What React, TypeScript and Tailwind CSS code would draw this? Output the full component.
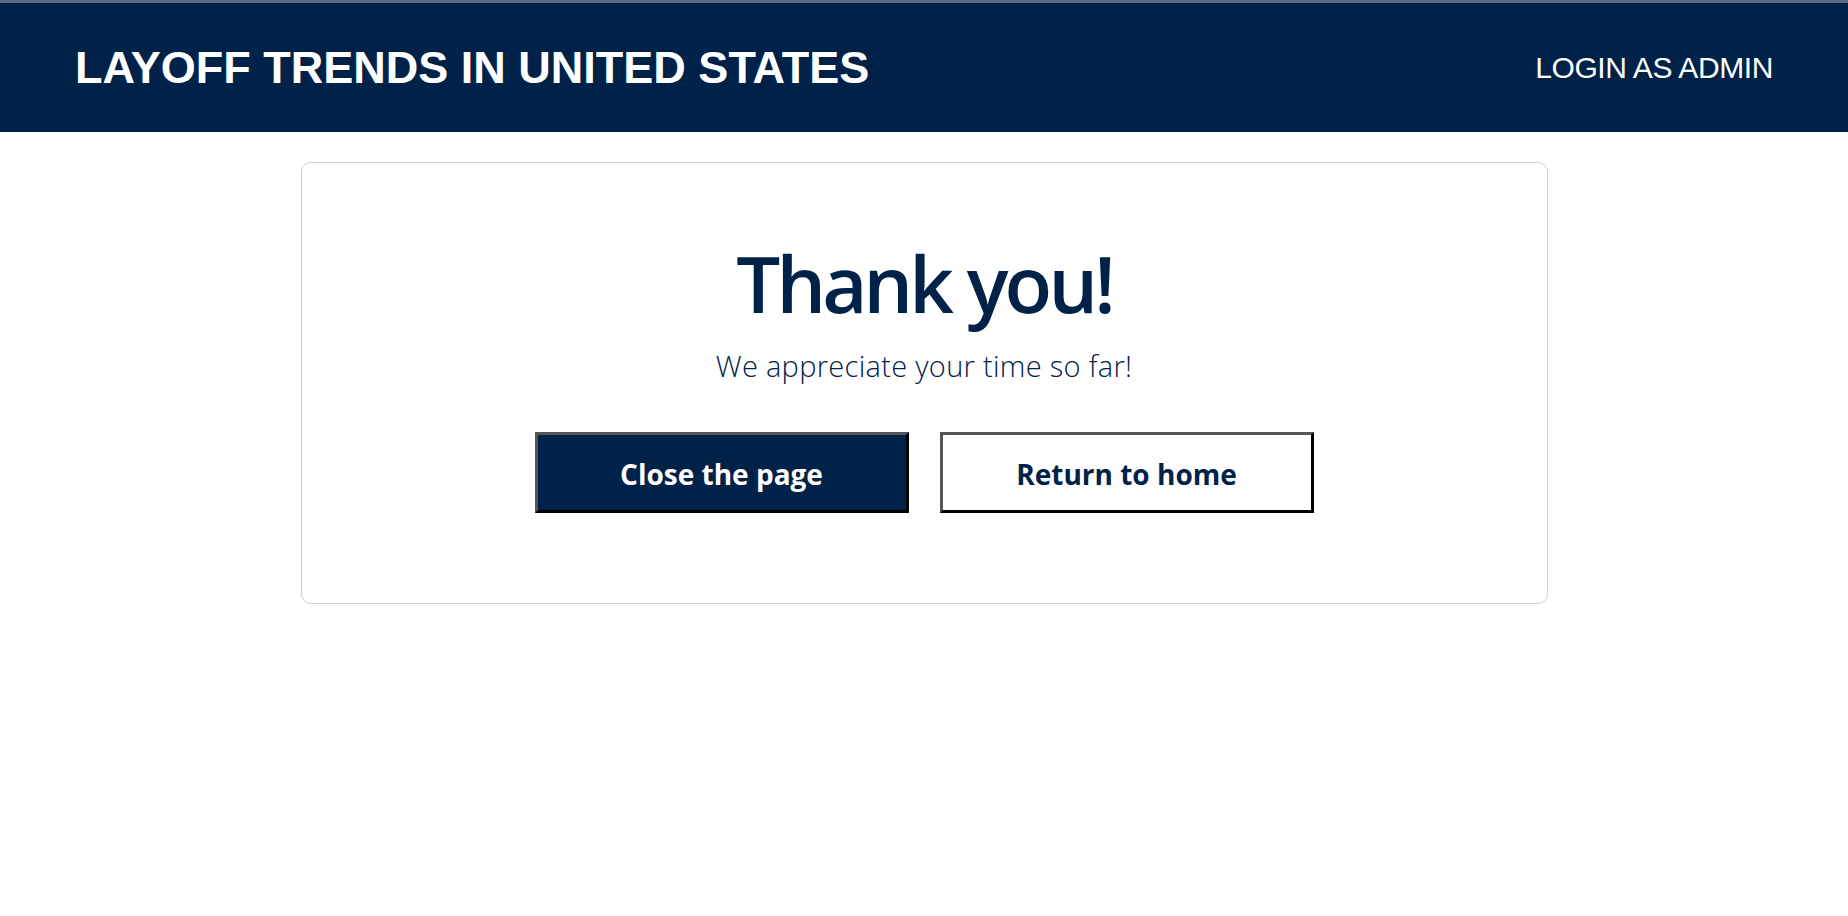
import React from 'react';

const navy = 'text-[#002249]';

function Header() {
  return (
    <header className="flex flex-col">
      <div className="h-[3px] bg-[#5b6b82]" />
      <div className="flex h-[129px] items-center justify-between bg-[#002249] px-[75px] font-['Liberation_Sans',Arial,sans-serif] text-white">
        <h1 className="text-[45px] font-bold leading-none">LAYOFF TRENDS IN UNITED STATES</h1>
        <a href="#" className="text-[30px] leading-none tracking-[-0.4px]">
          LOGIN AS ADMIN
        </a>
      </div>
    </header>
  );
}

export default function App() {
  return (
    <div className="min-h-screen bg-white">
      <Header />
      <main className="flex justify-center pt-[30px]">
        <div className="flex w-[1247px] flex-col items-center rounded-[10px] border border-[#cfcfcf] pt-[81px] pb-[90px] font-['Open_Sans',sans-serif]">
          <h2 className={`text-[78px] font-semibold leading-none tracking-[-3.8px] ${navy}`}>Thank you!</h2>
          <p className={`mt-[29px] text-[29px] font-light leading-none tracking-[0.3px] ${navy}`}>
            We appreciate your time so far!
          </p>
          <div className="mt-[52px] flex gap-[31px]">
            <button className="h-[81px] w-[374px] border-[3px] border-solid border-t-[#555555] border-l-[#555555] border-b-black border-r-black bg-[#002249] pt-[3px] text-[28px] font-bold text-white">
              Close the page
            </button>
            <button className={`h-[81px] w-[374px] border-[3px] border-solid border-t-[#555555] border-l-[#555555] border-b-black border-r-black bg-white pt-[3px] text-[28px] font-bold ${navy}`}>
              Return to home
            </button>
          </div>
        </div>
      </main>
    </div>
  );
}
